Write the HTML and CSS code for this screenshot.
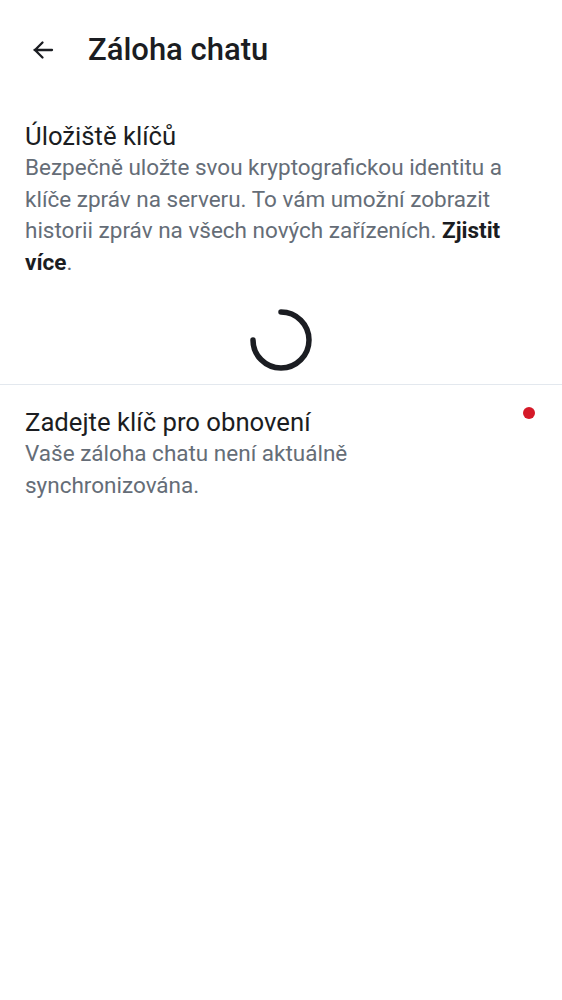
FILE: index.html
```html
<!DOCTYPE html>
<html lang="cs">
<head>
<meta charset="utf-8">
<link rel="stylesheet" href="styles.css">
</head>
<body>
<div class="screen">
  <header class="topbar">
    <button class="back" aria-label="Zpět">
      <svg width="24" height="24" viewBox="0 0 24 24"><path d="M21 12H3.5M11.5 4.5L4 12l7.5 7.5" fill="none" stroke="#1b1d22" stroke-width="2.3" stroke-linecap="round" stroke-linejoin="round"/></svg>
    </button>
    <h1 class="title">Záloha chatu</h1>
  </header>

  <section class="block">
    <h2 class="block-title">Úložiště klíčů</h2>
    <p class="block-text">Bezpečně uložte svou kryptografickou identitu a klíče zpráv na serveru. To vám umožní zobrazit historii zpráv na všech nových zařízeních. <strong>Zjistit více</strong>.</p>
  </section>

  <div class="spinner-wrap">
    <svg class="spinner" width="66" height="66" viewBox="0 0 66 66">
      <path d="M33 5 A28 28 0 1 1 5 33" fill="none" stroke="#1b1d22" stroke-width="5.5" stroke-linecap="round"/>
    </svg>
  </div>

  <div class="divider"></div>

  <section class="row">
    <div class="row-body">
      <h2 class="block-title">Zadejte klíč pro obnovení</h2>
      <p class="block-text">Vaše záloha chatu není aktuálně synchronizována.</p>
    </div>
    <span class="dot"></span>
  </section>
</div>
</body>
</html>
```
FILE: styles.css
```css
* { box-sizing: border-box; }
html, body { margin: 0; padding: 0; background: #ffffff; }
body {
  font-family: Roboto, "Noto Sans", "Liberation Sans", sans-serif;
  color: #1b1d22;
}
.screen { width: 562px; }
.topbar {
  height: 100px;
  display: flex;
  align-items: center;
  padding-left: 31px;
}
.back {
  border: 0;
  background: none;
  padding: 0;
  width: 24px;
  height: 24px;
  display: flex;
  margin-right: 33px;
}
.title {
  margin: 0;
  font-size: 31px;
  font-weight: 500;
  line-height: 40px;
}
.block { padding: 20px 25px 0; }
.block-title {
  margin: 0;
  font-size: 25.7px;
  font-weight: 400;
  line-height: 32px;
}
.block-text {
  margin: 0;
  font-size: 22.5px;
  line-height: 31.5px;
  color: #656d77;
}
.block-text strong { color: #1b1d22; font-weight: 700; }
.spinner-wrap {
  display: flex;
  justify-content: center;
  padding: 29px 0 11px;
}
.divider { height: 1px; background: #e3e8ee; }
.row {
  display: flex;
  align-items: flex-start;
  gap: 16px;
  padding: 21px 27px 0 25px;
}
.row-body { flex: 1; }
.dot {
  width: 12px;
  height: 12px;
  flex: none;
  border-radius: 50%;
  background: #d51928;
  margin-top: 1px;
}
```
